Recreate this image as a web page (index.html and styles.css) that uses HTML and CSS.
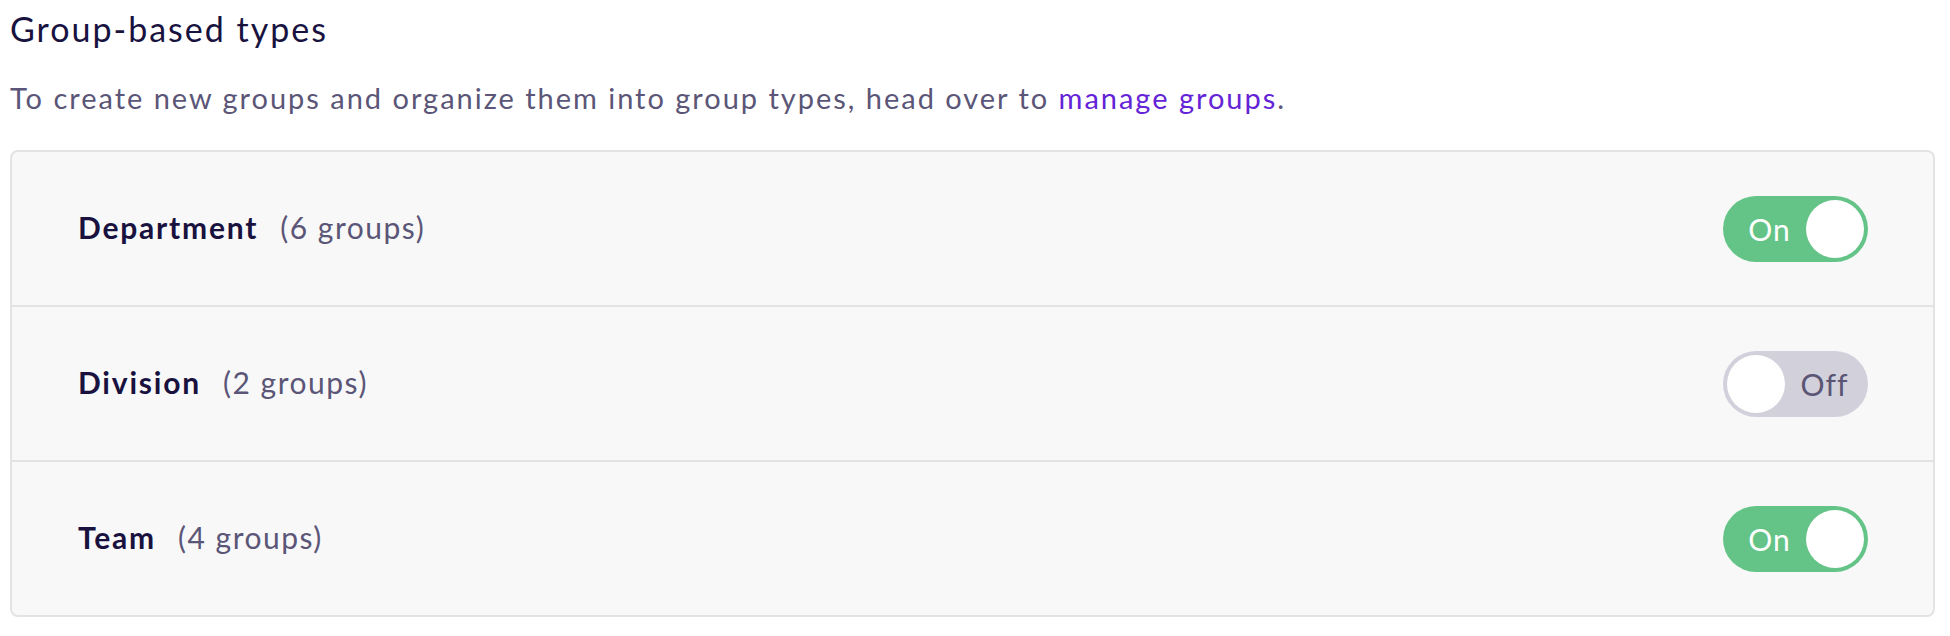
FILE: index.html
```html
<html>
<head>
  <title>Group-based types</title>
  <link rel="stylesheet" href="styles.css">
</head>
<body>
  <div class="settings">
    <h2 class="heading">Group-based types</h2>
    <p class="intro">To create new groups and organize them into group types, head over to <a href="#" class="link">manage groups</a>.</p>

    <div class="card">
      <div class="row">
        <div class="label"><span class="name">Department</span><span class="count">(6 groups)</span></div>
        <div class="toggle on"><span class="toggle-text">On</span><span class="knob"></span></div>
      </div>
      <div class="row">
        <div class="label"><span class="name">Division</span><span class="count">(2 groups)</span></div>
        <div class="toggle off"><span class="knob"></span><span class="toggle-text">Off</span></div>
      </div>
      <div class="row">
        <div class="label"><span class="name">Team</span><span class="count">(4 groups)</span></div>
        <div class="toggle on"><span class="toggle-text">On</span><span class="knob"></span></div>
      </div>
    </div>
  </div>
</body>
</html>
```

FILE: styles.css
```css
body { margin: 0; background: #fff; font-family: Lato, "Noto Sans", sans-serif; }
.settings { padding: 0 15px 0 10px; }
.heading { margin: 0; font-size: 34px; font-weight: 400; line-height: 58px; color: #18123f; letter-spacing: 2px; }
.intro { margin: 14px 0 0; font-size: 29px; line-height: 52px; color: #5b5677; letter-spacing: 1.98px; }
.link { color: #6423d6; text-decoration: none; }

.card { margin-top: 26px; background: #f8f8f8; border: 2px solid #e3e3e3; border-radius: 8px; }
.row { display: flex; align-items: center; justify-content: space-between;
  height: 153px; padding: 0 65px 0 66px; border-bottom: 2px solid #e3e3e3; }
.row:last-child { border-bottom: none; }
.label { display: flex; align-items: baseline; gap: 22px; font-size: 30px; padding-bottom: 4px; }
.name { font-weight: 700; color: #19123f; letter-spacing: 1.8px; }
.count { color: #5b5677; letter-spacing: 1.5px; }

.toggle { display: flex; align-items: center; width: 145px; height: 66px; padding: 4px;
  box-sizing: border-box; border-radius: 33px; font-size: 30px; letter-spacing: 1px; }
.toggle .knob { width: 58px; height: 58px; border-radius: 50%; background: #fff; flex: none; }
.toggle-text { flex: 1; text-align: center; }
.toggle.on { background: #64c386; color: #fff; }
.toggle.on .toggle-text { padding-left: 6px; }
.toggle.off { background: #d2d0db; color: #5a5575; }
```
